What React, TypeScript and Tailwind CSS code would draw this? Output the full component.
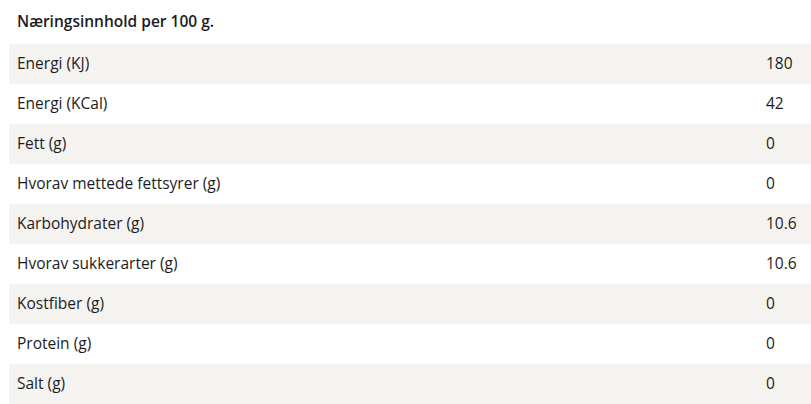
const rows: [string, string][] = [
  ['Energi (KJ)', '180'],
  ['Energi (KCal)', '42'],
  ['Fett (g)', '0'],
  ['Hvorav mettede fettsyrer (g)', '0'],
  ['Karbohydrater (g)', '10.6'],
  ['Hvorav sukkerarter (g)', '10.6'],
  ['Kostfiber (g)', '0'],
  ['Protein (g)', '0'],
  ['Salt (g)', '0'],
];

export default function App() {
  return (
    <div className="w-[811px] h-[404px] bg-white pl-[9px] text-[#1c1c24] font-['Open_Sans','Liberation_Sans',sans-serif]">
      <div className="h-[44px] flex items-center pl-2 text-[15.5px] font-semibold">Næringsinnhold per 100 g.</div>
      {rows.map(([label, value], index) => (
        <div
          key={index}
          className={`h-10 flex items-center text-[15.5px] ${index % 2 === 0 ? 'bg-[#f5f3ef]' : 'bg-white'}`}
        >
          <span className="flex-1 pl-2">{label}</span>
          <span className="w-[45px]">{value}</span>
        </div>
      ))}
    </div>
  );
}
